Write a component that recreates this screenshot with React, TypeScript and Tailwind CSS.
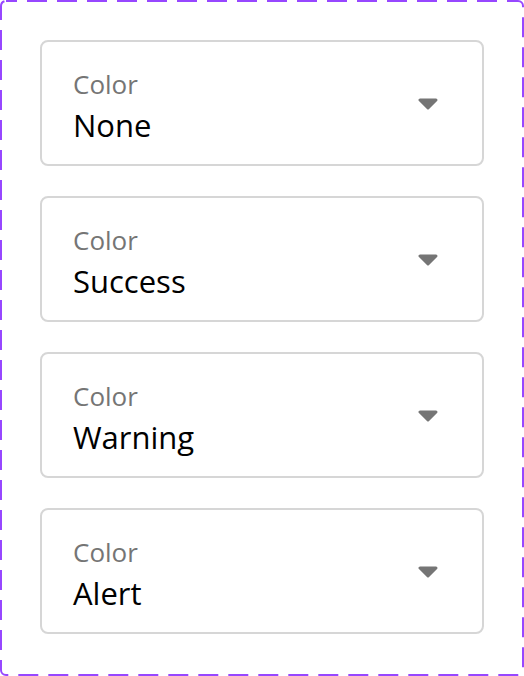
const options = ['None', 'Success', 'Warning', 'Alert'];

function CaretDown() {
  return (
    <svg width="20" height="12" viewBox="0 0 20 12" className="mt-[2px] shrink-0">
      <path d="M2 2 L18 2 L10 10 Z" fill="#757575" stroke="#757575" strokeWidth="3" strokeLinejoin="round" />
    </svg>
  );
}

function SelectField({ label, value }: { label: string; value: string }) {
  return (
    <div className="flex h-[126px] items-center justify-between rounded-lg border-2 border-[#d6d6d6] bg-white pl-[31px] pr-[44px]">
      <div className="flex flex-col gap-[7px] pt-[5px]">
        <span className="text-[26px] leading-[32px] text-[#757575]">{label}</span>
        <span className="text-[31px] leading-[36px] text-black">{value}</span>
      </div>
      <CaretDown />
    </div>
  );
}

export default function App() {
  return (
    <div
      className="relative h-[676px] w-[524px] bg-white"
      style={{ fontFamily: '"Open Sans", "Noto Sans", sans-serif' }}
    >
      {/* dashed frame, 20/10 dash like the design tool draws it */}
      <svg className="pointer-events-none absolute inset-0" width="524" height="676">
        <rect
          x="1"
          y="1"
          width="522"
          height="674"
          rx="5"
          fill="none"
          stroke="#9747ff"
          strokeWidth="2"
          strokeDasharray="20 10"
          strokeDashoffset="9"
        />
      </svg>
      <div className="flex flex-col gap-[30px] p-[40px]">
        {options.map((o) => (
          <SelectField key={o} label="Color" value={o} />
        ))}
      </div>
    </div>
  );
}
